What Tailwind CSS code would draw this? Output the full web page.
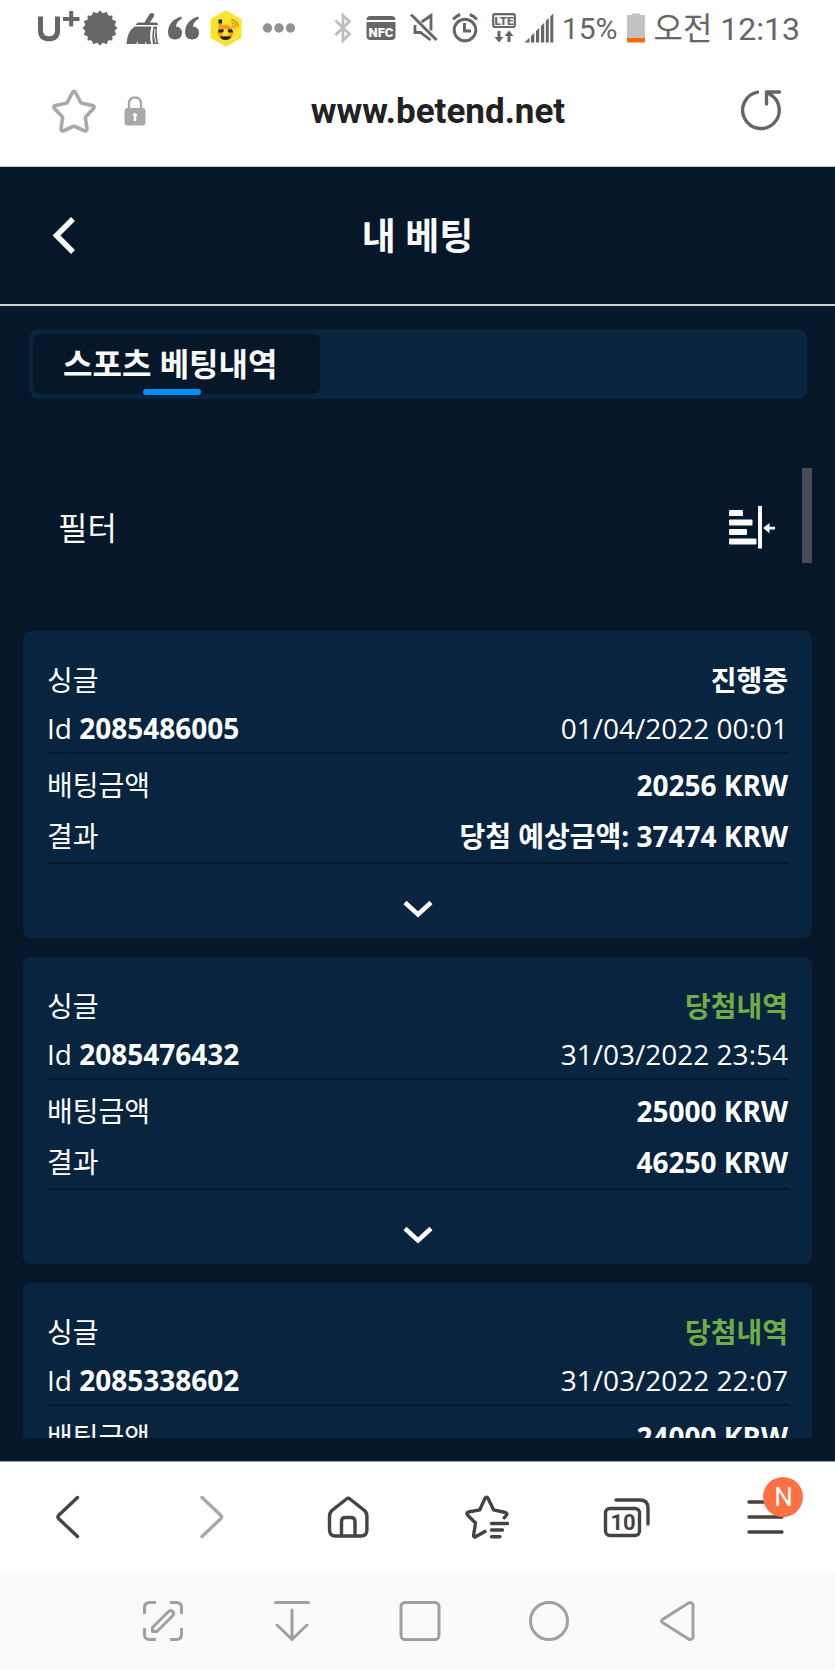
<!DOCTYPE html>
<html lang="ko">
<head>
    <meta charset="UTF-8">
    <meta name="viewport" content="width=device-width, initial-scale=1.0">
    <title>내 베팅</title>
    <script src="https://cdn.jsdelivr.net/npm/@tailwindcss/browser@4"></script>
</head>
<body class="flex h-screen flex-col overflow-hidden bg-[#051729] font-['Open_Sans','Noto_Sans_CJK_KR',sans-serif] text-white">

    <!-- Status bar -->
    <div class="flex h-14 shrink-0 items-center justify-between bg-white pl-[37px] pr-[35px] font-['Roboto','Noto_Sans_CJK_KR',sans-serif] text-[#666]">
        <div class="flex items-center gap-[6px]">
            <svg class="h-9 w-[39px] overflow-visible" viewBox="0 0 39 36" fill="none" stroke="#666">
                <path d="M3.500 6.500v14q0 8.300 8.500 8.300t8.500-8.300v-14" stroke-width="5"/>
                <path d="M26 9h16.500M34.200 1v15.500" stroke-width="4"/>
            </svg>
            <svg class="size-9" viewBox="0 0 36 36" fill="#666">
                <g transform="translate(18 18)">
                    <rect x="-12.400" y="-12.400" width="24.800" height="24.800"/>
                    <rect x="-12.400" y="-12.400" width="24.800" height="24.800" transform="rotate(22.500)"/>
                    <rect x="-12.400" y="-12.400" width="24.800" height="24.800" transform="rotate(45)"/>
                    <rect x="-12.400" y="-12.400" width="24.800" height="24.800" transform="rotate(67.500)"/>
                </g>
            </svg>
            <svg class="size-9" viewBox="0 0 36 36" fill="#666">
                <path d="M25.500 4q2.500-2 4.500 0 .8 1-.2 2.500L26 12.500h6.500q1.500 0 1.500 2.500h-22.500q1-2.500 3-2.500h6z"/>
                <path d="M10.500 16.500H27.500q-2.500 8-.5 17.500H22.500l-.8-3-.7 3h-7l-.8-3-.8 3H2.500q.5-12 8-17.500z"/>
                <path d="M29.500 16.500H33q-1 9 1.500 17.500h-5.500q-1.500-8 .5-17.500z"/>
                <path d="M31 19q-1.500 7 1 14" fill="none" stroke="#fff"/>
            </svg>
            <svg class="size-9" viewBox="0 0 36 36" fill="#666">
                <path d="M15 6.500l1 2.200q-6 3-6 7.800 6 .5 6 6.500-.5 6.500-7 6.500t-7-7q0-11.500 13-16z"/>
                <path d="M32 6.500l1 2.200q-6 3-6 7.800 6 .5 6 6.500-.5 6.500-7 6.500t-7-7q0-11.500 13-16z"/>
            </svg>
            <svg class="size-9" viewBox="0 0 36 36" fill="none">
                <path d="M18 2l14 8v17l-14 8-14-8V10z" fill="#f8e42c" stroke="#f8e42c" stroke-width="3" stroke-linejoin="round"/>
                <circle cx="17.500" cy="22.500" r="5.800" stroke="#f79a1c" stroke-width="4"/>
                <path d="M10.500 9.500h3.500v4h-3.500zM10.500 19.500h5.500l-1 3h-4.500zM19.500 19.500h4.500l1 3h-4.500zM12 26.500h11.500q-2 3.500-6 3.500t-5.500-3.500z" fill="#1c1c1c"/>
                <path d="M12.200 14v5" stroke="#f79a1c" stroke-width="3.500"/>
                <path d="M24 15.500a4 4 0 0 1 3 3M23.500 12.500a7 7 0 0 1 5.500 5M23 9.500a9 9 0 0 1 7.500 6.500" stroke="#f0871c" stroke-width="1.300"/>
            </svg>
            <svg class="ml-3 h-9 w-[34px]" viewBox="0 0 34 36" fill="#929292">
                <circle cx="5.500" cy="18" r="4.700"/><circle cx="17" cy="18" r="4.700"/><circle cx="28.500" cy="18" r="4.700"/>
            </svg>
        </div>

        <div class="flex items-center gap-2">
            <div class="flex items-center gap-[14px]">
                <!-- bluetooth -->
                <svg class="h-9 w-[18px]" viewBox="0 0 18 36" fill="none" stroke="#bdbdbd" stroke-width="2.800">
                    <path d="M1.500 10.500L15.500 24l-6.500 6.500V5.500l6.500 6L1.500 25"/>
                </svg>
                <!-- nfc -->
                <svg class="h-9 w-[30px]" viewBox="0 0 30 36" fill="#666">
                    <path d="M.5 10q0-4 4-4h21q4 0 4 4zM.5 12h29v14q0 4-4 4h-21q-4 0-4-4z"/>
                    <text x="15" y="26.500" text-anchor="middle" font-family="Roboto" font-weight="900" font-size="13" fill="#fff">NFC</text>
                </svg>
                <!-- mute -->
                <svg class="h-9 w-[28px]" viewBox="0 0 28 36" fill="none" stroke="#666" stroke-width="3">
                    <path d="M1 4.500L26.500 30"/>
                    <path d="M11.500 12l9.500-6.500v15M5 15v7.500h5.500L20.500 30" stroke-width="2.800"/>
                </svg>
                <!-- alarm -->
                <svg class="h-9 w-[26px]" viewBox="0 0 26 36" fill="none" stroke="#666" stroke-width="3">
                    <circle cx="13" cy="20" r="10.800"/>
                    <path d="M12.500 13v8h6.500M1.200 9.500q2-3 7-5M24.800 9.500q-2-3-7-5"/>
                </svg>
                <!-- lte -->
                <svg class="h-9 w-[24px]" viewBox="0 0 24 36" fill="#666">
                    <rect x="1.200" y="4.200" width="21.600" height="12.800" rx="2" fill="none" stroke="#666" stroke-width="2.200"/>
                    <text x="12" y="14.800" text-anchor="middle" font-family="Roboto" font-weight="900" font-size="11.500">LTE</text>
                    <path d="M5.500 21h3v6h3l-4.500 5.500-4.500-5.500h3zM15.500 32h3v-6h3l-4.500-5.500-4.500 5.500h3z"/>
                </svg>
            </div>
            <svg class="h-9 w-[30px]" viewBox="0 0 30 36" fill="#666">
                <path d="M.5 32.500l5-5v5zM7 26l3.300-3.300v9.800H7zM12 21l3.200-3.200v14.700H12zM17 16l3.200-3.200v19.700H17zM21.800 11l3-3v24.500h-3zM26.300 6.500l3-3v29h-3z"/>
            </svg>
            <span class="pt-[2px] text-[30px] leading-9">15%</span>
            <svg class="ml-[2px] h-9 w-[18px]" viewBox="0 0 18 36">
                <path d="M5 3.500h8v1.500h4q1 0 1 1v22H0V6q0-1 1-1h4z" fill="#c2c2c2"/>
                <path d="M0 28h18v3.500q0 1-1 1H1q-1 0-1-1z" fill="#ff6600"/>
            </svg>
            <span class="pt-[2px] text-[32px] leading-9">오전 12:13</span>
        </div>
    </div>

    <!-- Address bar -->
    <div class="flex h-[111px] shrink-0 items-center border-b border-[#c8c8c8] bg-white pl-[52px] pr-[53px]">
        <button aria-label="즐겨찾기">
            <svg class="size-11" viewBox="0 0 44 44" fill="none" stroke="#a9a9a9" stroke-width="3.600" stroke-linejoin="round">
                <path d="M20.500 3.500q1.500-2.500 3 0l5 9.500q.4.900 1.500 1.200l10.500 2.300q2.500.7 1 3l-7.500 8q-.8.900-.6 2l1.600 10q0 3-3 2.200l-9-4.200q-1-.5-2 0l-9 4.200q-3 .8-3-2.200l1.600-10q.2-1.100-.6-2l-7.500-8q-1.500-2.300 1-3l10.500-2.300q1.100-.3 1.500-1.200z"/>
            </svg>
        </button>
        <svg class="ml-7 h-[30px] w-[22px]" viewBox="0 0 22 30">
            <path d="M5 13V8q0-6.500 6-6.500T17 8v5" fill="none" stroke="#a9a9a9" stroke-width="2.400"/>
            <rect x="0.500" y="12" width="21" height="17.500" rx="3" fill="#a9a9a9"/>
            <path d="M11 17a2 2 0 0 1 1.200 3.600V25h-2.400v-4.400A2 2 0 0 1 11 17z" fill="#fff"/>
        </svg>
        <a href="#" class="flex-1 pr-2 pt-[2px] text-center font-['Roboto',sans-serif] text-[35px] font-bold leading-10 text-[#222]">www.betend.net</a>
        <button class="pb-[2px]" aria-label="새로고침">
            <svg class="size-11" viewBox="0 0 44 44" fill="none" stroke="#666" stroke-width="3.400" stroke-linecap="round" stroke-linejoin="round">
                <path d="M19.500 4.200A18.300 18.300 0 1 0 31.500 6M41.500 4H28.500v12M28.500 4l5.500 4"/>
            </svg>
        </button>
    </div>

    <!-- Page header -->
    <header class="relative flex h-[139px] shrink-0 items-center justify-center border-b-2 border-[#cfd1d3]">
        <button class="absolute left-[50px]" aria-label="뒤로">
            <svg class="h-10 w-7" viewBox="0 0 28 40" fill="none" stroke="#fafafa" stroke-width="5.500">
                <path d="M23 3L6.500 19.500 23 36"/>
            </svg>
        </button>
        <h1 class="text-[37px] font-bold leading-[48px] text-[#fafafa]">내 베팅</h1>
    </header>

    <!-- Tabs -->
    <nav class="ml-[30px] mr-7 mt-[23px] flex h-[70px] shrink-0 rounded-lg bg-[#08243e] px-[3px] py-[5px]">
        <button class="rounded-lg bg-[#051729] pl-[30px] pr-10 text-[32px] font-bold text-[#fafafa]">
            <span class="relative flex h-full items-center pr-[3px] leading-[48px]">
                스포츠 베팅내역
                <span class="absolute -bottom-px left-1/2 h-[6px] w-[58px] -translate-x-1/2 rounded-full bg-[#0090ff]"></span>
            </span>
        </button>
    </nav>

    <main class="relative mx-[23px] mb-[23px] mt-[69px] min-h-0 flex-1">
        <!-- Scroll thumb -->
        <div class="absolute right-0 top-0 h-[95px] w-[10px] bg-[#464b54]"></div>

        <div class="h-full overflow-y-auto [scrollbar-width:none]">
            <div class="mb-[43px] flex h-[120px] items-center justify-between pl-[35px] pr-9">
                <h2 class="text-[32px] leading-[48px] text-[#fafafa]">필터</h2>
                <button class="pb-[3px]" aria-label="필터">
                    <svg class="h-11 w-12" viewBox="0 0 48 44" fill="#fafafa">
                        <rect x="1" y="5" width="14" height="6" rx="1"/>
                        <rect x="1" y="14.500" width="23.500" height="6" rx="1"/>
                        <rect x="1" y="24" width="18" height="6" rx="1"/>
                        <rect x="1" y="33.500" width="27.500" height="6" rx="1"/>
                        <rect x="30" y="1" width="4" height="42.500"/>
                        <path d="M35 23l6.500-5v3.800H47v2.600h-5.500v3.800z"/>
                    </svg>
                </button>
            </div>

            <div class="flex flex-col gap-[19px] text-[28px]">
                <!-- Bet 1 -->
                <article class="rounded-lg bg-[#08243e] px-6 pt-[25px]">
                    <div class="border-b-2 border-[#051729] leading-[48px]">
                        <div class="flex justify-between"><span>싱글</span><b>진행중</b></div>
                        <div class="flex justify-between"><span>Id <b>2085486005</b></span><time>01/04/2022 00:01</time></div>
                    </div>
                    <div class="border-b-2 border-[#051729] pt-[6px] leading-[51px]">
                        <div class="flex justify-between"><span>배팅금액</span><b>20256 KRW</b></div>
                        <div class="flex justify-between"><span>결과</span><b>당첨 예상금액: 37474 KRW</b></div>
                    </div>
                    <button class="flex h-[74px] w-full items-center justify-center pt-4" aria-label="자세히">
                        <svg class="h-5 w-8" viewBox="0 0 32 20" fill="none" stroke="#fff" stroke-width="4.500"><path d="M3 3.500L16 15.500 29 3.500"/></svg>
                    </button>
                </article>

                <!-- Bet 2 -->
                <article class="rounded-lg bg-[#08243e] px-6 pt-[25px]">
                    <div class="border-b-2 border-[#051729] leading-[48px]">
                        <div class="flex justify-between"><span>싱글</span><b class="text-[#6fac46]">당첨내역</b></div>
                        <div class="flex justify-between"><span>Id <b>2085476432</b></span><time>31/03/2022 23:54</time></div>
                    </div>
                    <div class="border-b-2 border-[#051729] pt-[6px] leading-[51px]">
                        <div class="flex justify-between"><span>배팅금액</span><b>25000 KRW</b></div>
                        <div class="flex justify-between"><span>결과</span><b>46250 KRW</b></div>
                    </div>
                    <button class="flex h-[74px] w-full items-center justify-center pt-4" aria-label="자세히">
                        <svg class="h-5 w-8" viewBox="0 0 32 20" fill="none" stroke="#fff" stroke-width="4.500"><path d="M3 3.500L16 15.500 29 3.500"/></svg>
                    </button>
                </article>

                <!-- Bet 3 -->
                <article class="rounded-lg bg-[#08243e] px-6 pt-[25px]">
                    <div class="border-b-2 border-[#051729] leading-[48px]">
                        <div class="flex justify-between"><span>싱글</span><b class="text-[#6fac46]">당첨내역</b></div>
                        <div class="flex justify-between"><span>Id <b>2085338602</b></span><time>31/03/2022 22:07</time></div>
                    </div>
                    <div class="pt-[6px] leading-[51px]">
                        <div class="flex justify-between"><span>배팅금액</span><b>24000 KRW</b></div>
                    </div>
                </article>
            </div>
        </div>
    </main>

    <!-- Browser toolbar -->
    <nav class="grid h-28 shrink-0 grid-cols-6 place-items-center border-t border-[#9aa0a8] bg-white pb-[2px]">
        <button aria-label="이전">
            <svg class="size-11" viewBox="0 0 44 44" fill="none" stroke="#444" stroke-width="3.400" stroke-linecap="round" stroke-linejoin="round">
                <path d="M29.500 2.500L10.500 20.500q-1.200 1.500 0 3l19 18"/>
            </svg>
        </button>
        <button aria-label="다음">
            <svg class="size-11" viewBox="0 0 44 44" fill="none" stroke="#a9a9a9" stroke-width="3.400" stroke-linecap="round" stroke-linejoin="round">
                <path d="M15 2.500l19 18q1.200 1.500 0 3l-19 18"/>
            </svg>
        </button>
        <button aria-label="홈">
            <svg class="size-11" viewBox="0 0 44 44" fill="none" stroke="#444" stroke-width="3.400" stroke-linejoin="round">
                <path d="M20.500 4q1.700-1.300 3.400 0l14 11q3 2.500 3 6v14q0 6-6 6H9.500q-6 0-6-6V21q0-3.500 3-6z"/>
                <path d="M15.500 40.500V26.500q0-4 4-4h5.500q4 0 4 4v14"/>
            </svg>
        </button>
        <button aria-label="북마크">
            <svg class="size-11" viewBox="0 0 44 44" fill="none" stroke="#444" stroke-width="3.400" stroke-linecap="round" stroke-linejoin="round">
                <path d="M20 36.500l-9.500 5.300q-2 .7-1.900-1.500L10.500 28 2.500 20q-1.500-2 .8-3l11.500-2.200L20 3.200q1.500-2.200 3 0l5.500 11.600 12 2.700q2 .7 1 2.500l-2.300 2.800"/>
                <path d="M26.500 28.500h16M26.500 35h11M26.500 41.800h8.500"/>
            </svg>
        </button>
        <button aria-label="탭">
            <svg class="h-11 w-12" viewBox="0 0 48 44" fill="none" stroke="#444" stroke-width="3.400" stroke-linecap="round">
                <rect x="3.500" y="13.500" width="34" height="27" rx="4.500"/>
                <path d="M14 5h24q8 0 8 8v16"/>
                <text x="21" y="35" text-anchor="middle" font-family="Roboto" font-weight="700" font-size="22" fill="#444" stroke="none">10</text>
            </svg>
        </button>
        <button class="relative" aria-label="메뉴">
            <svg class="size-11" viewBox="0 0 44 44" fill="none" stroke="#444" stroke-width="3.400" stroke-linecap="round">
                <path d="M6 7h33M6 22h33M6 37h33"/>
            </svg>
            <span class="absolute -top-[18px] left-5 size-10 rounded-full bg-[#ff7043] text-center font-['Roboto',sans-serif] text-[26px] leading-10 text-white">N</span>
        </button>
    </nav>

    <!-- System navigation -->
    <nav class="grid h-[97px] shrink-0 grid-cols-5 place-items-center bg-[#fafafa] pb-[2px] pl-[99px] pr-[93px]">
        <button aria-label="캡처">
            <svg class="size-11" viewBox="0 0 44 44" fill="none" stroke="#a0a0a0" stroke-width="3">
                <path d="M15 3.500H8.500q-5 0-5 5V15M29 3.500h6.500q5 0 5 5V15M3.500 29v6.500q0 5 5 5H15M40.500 29v6.500q0 5-5 5H29"/>
                <path d="M11.500 28.500L27.500 12.500q2-2 4.200 0 1.800 2.200 0 4.300L16 32.500h-4.500z" stroke-linejoin="round"/>
            </svg>
        </button>
        <button aria-label="알림창">
            <svg class="size-11" viewBox="0 0 44 44" fill="none" stroke="#a0a0a0" stroke-width="3" stroke-linecap="round" stroke-linejoin="round">
                <path d="M5.500 3.500h33M22 11v29.500M7 26l15 14.500L37 26"/>
            </svg>
        </button>
        <button aria-label="최근 앱">
            <svg class="size-11" viewBox="0 0 44 44" fill="none" stroke="#a0a0a0" stroke-width="3">
                <rect x="3" y="3.500" width="38" height="37" rx="4"/>
            </svg>
        </button>
        <button aria-label="홈 화면">
            <svg class="size-11" viewBox="0 0 44 44" fill="none" stroke="#a0a0a0" stroke-width="3">
                <circle cx="22" cy="22" r="18.500"/>
            </svg>
        </button>
        <button aria-label="뒤로 가기">
            <svg class="size-11" viewBox="0 0 44 44" fill="none" stroke="#a0a0a0" stroke-width="3" stroke-linejoin="round">
                <path d="M6.500 20.500L32.500 4q3.500-1.500 4.500 2v32q-1 3.500-4.500 2L6.500 23.500q-2-1.500 0-3z"/>
            </svg>
        </button>
    </nav>

</body>
</html>
